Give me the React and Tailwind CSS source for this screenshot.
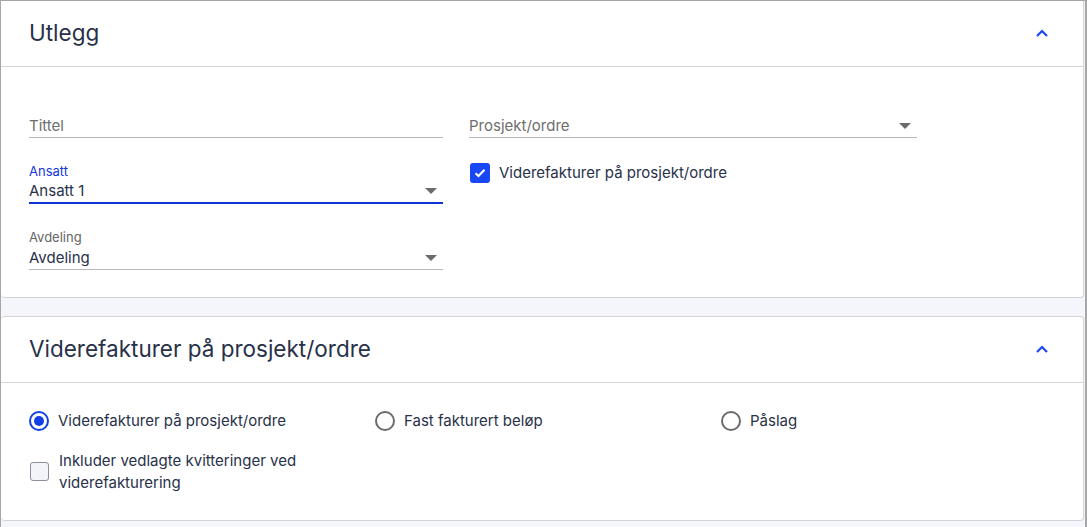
import React from 'react';

const Caret = () => (
  <svg width="12" height="6" viewBox="0 0 12 6" className="shrink-0">
    <path d="M0 0 L12 0 L6 6 Z" fill="#6b6b6b" />
  </svg>
);

const ChevronUp = () => (
  <svg width="14" height="9" viewBox="0 0 14 9" className="shrink-0">
    <path d="M2 7 L7 2 L12 7" fill="none" stroke="#1a47ff" strokeWidth="2.2" />
  </svg>
);

const CardHeader = ({ title }) => (
  <div className="h-[66px] border-b border-[#d4d4d6] flex items-center justify-between pl-[28px] pr-[34px]">
    <h2 className="text-[22.5px] leading-none text-[#283149]">{title}</h2>
    <ChevronUp />
  </div>
);

// select/input with underline
const Field = ({ label, value, placeholder, focused, caret }) => (
  <div className="flex flex-col">
    <div className={`h-[16px] text-[13px] leading-[16px] ${focused ? 'text-[#1538d8]' : 'text-[#666]'}`}>{label}</div>
    <div
      className={`h-[22px] mt-[3px] flex items-center justify-between pr-[6px] ${
        focused ? 'border-b-2 border-[#1233d4]' : 'border-b border-[#b8b8b8]'
      }`}
    >
      <span className={`text-[15px] leading-[20px] pb-[2px] ${value ? 'text-[#283149]' : 'text-[#6e6e6e]'}`}>
        {value || placeholder}
      </span>
      {caret && <span className="pb-[2px]"><Caret /></span>}
    </div>
  </div>
);

const Radio = ({ checked, label }) => (
  <label className="flex items-center gap-[9px]">
    <span
      className={`w-[20px] h-[20px] rounded-full border-2 flex items-center justify-center ${
        checked ? 'border-[#1240e6]' : 'border-[#6b6b6b]'
      }`}
    >
      {checked && <span className="w-[10px] h-[10px] rounded-full bg-[#1240e6]" />}
    </span>
    <span className="text-[15px] text-[#283149]">{label}</span>
  </label>
);

export default function App() {
  return (
    <div
      className="w-[1087px] h-[527px] overflow-hidden bg-[#f5f6fb] border-t border-l border-r-2 border-[#a6a6a6] pr-px flex flex-col gap-[18px]"
      style={{ fontFamily: 'Inter, "Noto Sans", sans-serif' }}
    >
      {/* Utlegg */}
      <section className="bg-white border-r border-b border-[#d4d4d6] rounded-b-[4px] h-[297px] shrink-0">
        <CardHeader title="Utlegg" />
        <div className="pl-[28px] pt-[30px] grid grid-cols-[414px_448px] gap-x-[26px]">
          <div className="flex flex-col gap-[25px]">
            <Field placeholder="Tittel" />
            <Field label="Ansatt" value="Ansatt 1" focused caret />
            <Field label="Avdeling" value="Avdeling" caret />
          </div>
          <div className="flex flex-col">
            <Field placeholder="Prosjekt/ordre" caret />
            <label className="mt-[24px] ml-[1px] flex items-center gap-[9px]">
              <span className="w-[20px] h-[20px] rounded-[3px] bg-[#1a47f5] flex items-center justify-center">
                <svg width="12" height="10" viewBox="0 0 12 10">
                  <path d="M1.5 5.2 L4.5 8 L10.5 1.8" fill="none" stroke="white" strokeWidth="2" />
                </svg>
              </span>
              <span className="text-[15px] text-[#283149]">Viderefakturer på prosjekt/ordre</span>
            </label>
          </div>
        </div>
      </section>

      {/* Viderefakturer */}
      <section className="bg-white border border-l-0 border-[#d4d4d6] rounded-[4px] h-[205px] shrink-0">
        <CardHeader title="Viderefakturer på prosjekt/ordre" />
        <div className="pl-[28px] pr-[16px] pt-[27px]">
          <div className="grid grid-cols-3">
            <Radio checked label="Viderefakturer på prosjekt/ordre" />
            <Radio label="Fast fakturert beløp" />
            <Radio label="Påslag" />
          </div>
          <label className="mt-[17px] ml-[1px] flex items-start gap-[10px]">
            <span className="mt-[12px] w-[19px] h-[19px] rounded-[3px] border border-[#8a8f9a] bg-[#f3f4f9]" />
            <span className="text-[15px] leading-[22px] text-[#283149] w-[300px]">
              Inkluder vedlagte kvitteringer ved viderefakturering
            </span>
          </label>
        </div>
      </section>
    </div>
  );
}
